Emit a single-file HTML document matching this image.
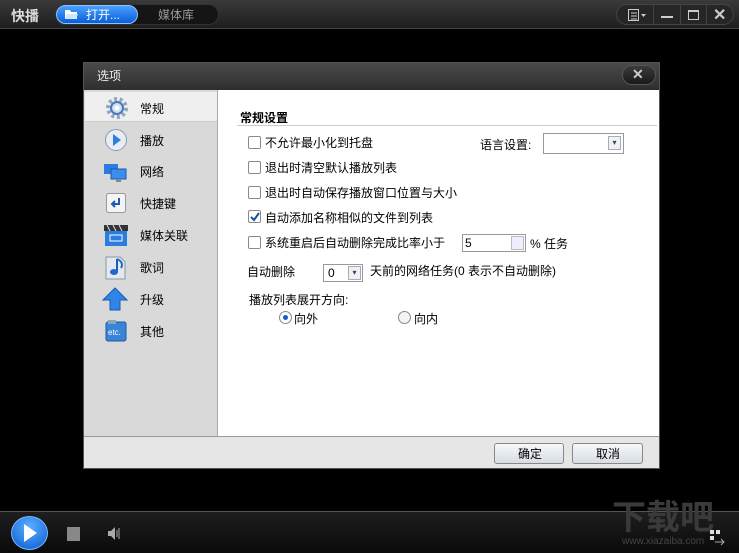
<!DOCTYPE html>
<html><head><meta charset="utf-8"><style>
*{margin:0;padding:0;box-sizing:border-box}
body{width:739px;height:553px;background:#000;position:relative;overflow:hidden;font-family:"Liberation Sans","Noto Sans CJK SC",sans-serif;font-size:12px;color:#000}
.a{position:absolute}
.top{left:0;top:0;width:739px;height:29px;background:linear-gradient(#3a3a3a,#1e1e1e);border-bottom:1px solid #444}
.cb{width:13px;height:13px;border:1px solid #8a8a8a;background:#fff;border-radius:2px}
.t{white-space:nowrap}
</style></head><body>
<div class="a top"></div>
<div class="a t" style="left:11px;top:6px;color:#ddd;font-size:14px;font-weight:bold">快播</div>
<div class="a" style="left:55px;top:4px;width:164px;height:21px;border-radius:11px;background:#151515;border:1px solid #333"></div>
<div class="a" style="left:56px;top:5px;width:82px;height:19px;border-radius:10px;background:linear-gradient(#4aa0ff,#0a5ed6);border:1px solid #8cc4ff"></div>
<svg class="a" style="left:64px;top:9px" width="15" height="11"><path d="M1 1h5l1 2h6v7H1z" fill="#fff"/><path d="M3 5h11l-2 5H1z" fill="#cfe4ff"/></svg>
<div class="a t" style="left:86px;top:6px;color:#fff;font-size:12px">打开...</div>
<div class="a t" style="left:158px;top:6px;color:#999;font-size:12px">媒体库</div>
<div class="a" style="left:616px;top:4px;width:118px;height:21px;border-radius:11px;background:#262626;border:1px solid #444"></div>
<div class="a" style="left:653px;top:5px;width:1px;height:19px;background:#444"></div>
<div class="a" style="left:680px;top:5px;width:1px;height:19px;background:#444"></div>
<div class="a" style="left:706px;top:5px;width:1px;height:19px;background:#444"></div>
<svg class="a" style="left:628px;top:9px" width="20" height="12"><rect x="0.5" y="0.5" width="10" height="11" fill="none" stroke="#ccc"/><path d="M3 4h6M3 7h6M3 10h6" stroke="#ccc"/><path d="M13 5h5l-2.5 3z" fill="#ccc"/></svg>
<div class="a" style="left:661px;top:16px;width:12px;height:2px;background:#ccc"></div>
<div class="a" style="left:688px;top:10px;width:11px;height:10px;border:1px solid #ccc;border-top-width:2px"></div>
<div class="a t" style="left:713px;top:5px;color:#ccc;font-size:16px;font-weight:bold">✕</div>

<!-- dialog -->
<div class="a" style="left:83px;top:62px;width:577px;height:407px;background:#2c2c2c;border:1px solid #555"></div>
<div class="a" style="left:84px;top:63px;width:575px;height:27px;background:linear-gradient(#4a4a4a,#2e2e2e)"></div>
<div class="a t" style="left:97px;top:67px;color:#eee;font-size:12px">选项</div>
<div class="a" style="left:622px;top:65px;width:34px;height:20px;border-radius:10px;background:linear-gradient(#3a3a3a,#1a1a1a);border:1px solid #555"></div>
<div class="a t" style="left:632px;top:66px;color:#ccc;font-size:14px;font-weight:bold">✕</div>
<div class="a" style="left:84px;top:90px;width:134px;height:347px;background:#d9d9d9;border-right:1px solid #aaa"></div>
<div class="a" style="left:85px;top:92px;width:132px;height:30px;background:#efefef;border-bottom:1px solid #ccc"></div>
<div class="a" style="left:218px;top:90px;width:441px;height:347px;background:#fff"></div>
<div class="a" style="left:84px;top:436px;width:575px;height:32px;background:#e6e6e6;border-top:1px solid #999"></div>
<div class="a" style="left:494px;top:443px;width:70px;height:21px;border:1px solid #888;border-radius:3px;background:linear-gradient(#f6f8fa,#d8dde4)"></div>
<div class="a t" style="left:518px;top:445px">确定</div>
<div class="a" style="left:572px;top:443px;width:71px;height:21px;border:1px solid #888;border-radius:3px;background:linear-gradient(#f6f8fa,#d8dde4)"></div>
<div class="a t" style="left:596px;top:445px">取消</div>

<!-- sidebar icons -->
<svg class="a" style="left:105px;top:96px" width="24" height="24"><circle cx="12" cy="12" r="9" fill="none" stroke="#8fa6c0" stroke-width="4" stroke-dasharray="3 2.6"/><circle cx="12" cy="12" r="6" fill="#cfe0f5" stroke="#4a78b8" stroke-width="2"/><circle cx="12" cy="12" r="2.5" fill="#fff"/></svg>
<svg class="a" style="left:104px;top:128px" width="24" height="24"><circle cx="12" cy="12" r="10.5" fill="#e8edf3" stroke="#8a9ab0"/><path d="M9 6l8 6-8 6z" fill="#2f7fe0"/></svg>
<svg class="a" style="left:104px;top:163px" width="24" height="22"><rect x="0" y="1" width="14" height="10" fill="#2a7ce0"/><rect x="7" y="6" width="15" height="10" fill="#3a8ef0" stroke="#1a5aa8"/><rect x="12" y="16" width="5" height="3" fill="#888"/></svg>
<svg class="a" style="left:106px;top:193px" width="20" height="20"><rect x="0.5" y="0.5" width="19" height="19" rx="2" fill="#f4f4f4" stroke="#999"/><path d="M13 5v6H7M9 8l-3 3 3 3" stroke="#1a5ab0" stroke-width="2" fill="none"/></svg>
<svg class="a" style="left:104px;top:225px" width="24" height="21"><rect x="0" y="0" width="24" height="6" fill="#333"/><path d="M3 0l3 6M9 0l3 6M15 0l3 6" stroke="#ddd"/><rect x="1" y="6" width="22" height="15" fill="#2b7ee0"/><rect x="6" y="10" width="12" height="6" fill="none" stroke="#fff"/></svg>
<svg class="a" style="left:105px;top:256px" width="22" height="24"><path d="M1 1h14l5 5v17H1z" fill="#e4e8ee" stroke="#8899aa"/><path d="M12 3v13" stroke="#1a5ab0" stroke-width="2"/><ellipse cx="9" cy="16" rx="4" ry="3" fill="#1a6ad0"/><path d="M12 3c5 2 6 6 4 9" stroke="#1a6ad0" stroke-width="2" fill="none"/></svg>
<svg class="a" style="left:102px;top:287px" width="26" height="24"><path d="M13 1L1 13h7v10h10V13h7z" fill="#2f86e8" stroke="#1a5ab0"/></svg>
<svg class="a" style="left:105px;top:319px" width="22" height="24"><rect x="1" y="3" width="20" height="19" rx="2" fill="#3a84d8" stroke="#1a5aa8"/><rect x="3" y="1" width="8" height="4" fill="#8aa"/><text x="3" y="16" font-size="8" fill="#fff" font-family="Liberation Sans">etc.</text></svg>
<div class="a t" style="left:140px;top:100px">常规</div>
<div class="a t" style="left:140px;top:132px">播放</div>
<div class="a t" style="left:140px;top:163px">网络</div>
<div class="a t" style="left:140px;top:195px">快捷键</div>
<div class="a t" style="left:140px;top:227px">媒体关联</div>
<div class="a t" style="left:140px;top:259px">歌词</div>
<div class="a t" style="left:140px;top:291px">升级</div>
<div class="a t" style="left:140px;top:323px">其他</div>

<!-- content -->
<div class="a t" style="left:240px;top:109px;font-weight:bold;font-size:12px">常规设置</div>
<div class="a" style="left:237px;top:125px;width:420px;height:1px;background:#ccc"></div>
<div class="a cb" style="left:248px;top:136px"></div><div class="a t" style="left:265px;top:134px">不允许最小化到托盘</div>
<div class="a t" style="left:480px;top:136px">语言设置:</div>
<div class="a" style="left:543px;top:133px;width:81px;height:21px;border:1px solid #999;background:#fff"></div>
<div class="a" style="left:608px;top:136px;width:13px;height:14px;border:1px solid #aab;background:#eef2f6;font-size:8px;color:#345;text-align:center;line-height:12px">▾</div>
<div class="a cb" style="left:248px;top:161px"></div><div class="a t" style="left:265px;top:159px">退出时清空默认播放列表</div>
<div class="a cb" style="left:248px;top:186px"></div><div class="a t" style="left:265px;top:184px">退出时自动保存播放窗口位置与大小</div>
<div class="a cb" style="left:248px;top:210px"></div><svg class="a" style="left:249px;top:211px" width="12" height="12"><path d="M2 6l3 3 5-7" stroke="#1a4f9a" stroke-width="2" fill="none"/></svg><div class="a t" style="left:265px;top:209px">自动添加名称相似的文件到列表</div>
<div class="a cb" style="left:248px;top:236px"></div><div class="a t" style="left:265px;top:234px">系统重启后自动删除完成比率小于</div>
<div class="a" style="left:462px;top:234px;width:64px;height:18px;border:1px solid #999;background:#fff"></div>
<div class="a t" style="left:465px;top:236px">5</div>
<div class="a" style="left:511px;top:236px;width:13px;height:14px;border:1px solid #bbb;background:#eef"></div>
<div class="a t" style="left:530px;top:235px">% 任务</div>
<div class="a t" style="left:247px;top:263px">自动删除</div>
<div class="a" style="left:323px;top:264px;width:40px;height:18px;border:1px solid #999;background:#fff"></div>
<div class="a t" style="left:328px;top:266px">0</div>
<div class="a" style="left:348px;top:266px;width:13px;height:14px;border:1px solid #aab;background:#eef2f6;font-size:8px;color:#345;text-align:center;line-height:12px">▾</div>
<div class="a t" style="left:370px;top:262px">天前的网络任务(0 表示不自动删除)</div>
<div class="a t" style="left:249px;top:291px">播放列表展开方向:</div>
<div class="a" style="left:279px;top:311px;width:13px;height:13px;border-radius:50%;border:1px solid #888;background:#fff"></div>
<div class="a" style="left:283px;top:315px;width:5px;height:5px;border-radius:50%;background:#1a5ad0"></div>
<div class="a t" style="left:294px;top:310px">向外</div>
<div class="a" style="left:398px;top:311px;width:13px;height:13px;border-radius:50%;border:1px solid #888;background:#f4f4f4"></div>
<div class="a t" style="left:414px;top:310px">向内</div>

<!-- bottom -->
<div class="a" style="left:0;top:511px;width:739px;height:1px;background:#555"></div>
<div class="a" style="left:0;top:512px;width:739px;height:41px;background:linear-gradient(#1e1e1e,#0a0a0a)"></div>
<div class="a" style="left:11px;top:516px;width:37px;height:34px;border-radius:50%;background:radial-gradient(circle at 50% 30%,#5ab0ff,#0a5ad0);border:1px solid #79b8ff"></div>
<svg class="a" style="left:22px;top:523px" width="16" height="20"><path d="M2 1l13 9-13 9z" fill="#fff"/></svg>
<div class="a" style="left:67px;top:527px;width:13px;height:14px;background:#888"></div>
<svg class="a" style="left:107px;top:526px" width="14" height="15"><path d="M1 5h3l4-4v13l-4-4H1z" fill="#aaa"/><path d="M10 4v7M12 2v11" stroke="#aaa"/></svg>
<div class="a t" style="left:612px;top:490px;color:#3a3a3a;font-size:34px;font-weight:bold">下载吧</div>
<div class="a t" style="left:622px;top:536px;color:#444;font-size:10px">www.xiazaiba.com</div>
<svg class="a" style="left:710px;top:530px" width="18" height="16"><rect x="0" y="0" width="4" height="4" fill="#ddd"/><rect x="6" y="0" width="4" height="4" fill="#ddd"/><rect x="0" y="6" width="4" height="4" fill="#ddd"/><path d="M5 12h9M11 9l3 3-3 3" stroke="#aaa" fill="none"/></svg>
</body></html>
